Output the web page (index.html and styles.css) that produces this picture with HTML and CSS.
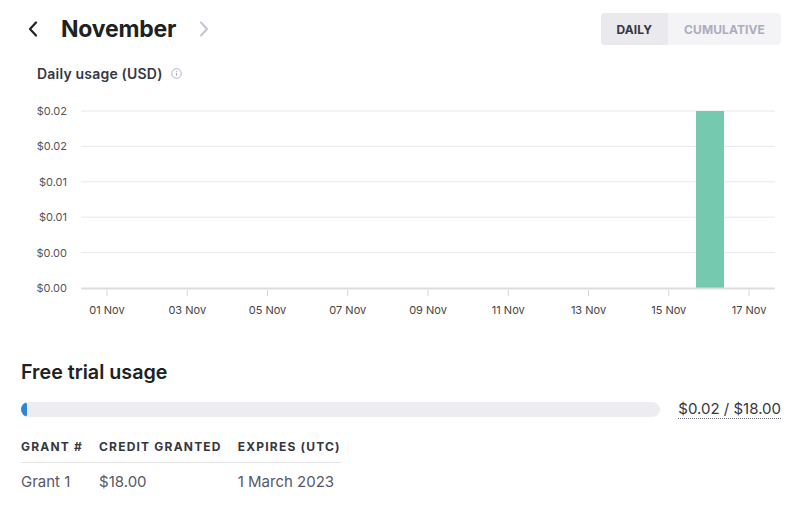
FILE: index.html
```html
<!DOCTYPE html>
<html lang="en">
<head>
    <meta charset="UTF-8">
    <title>Usage</title>
    <link rel="stylesheet" href="styles.css">
</head>
<body>
    <div class="page">
        <div class="month-bar">
            <div class="month-nav">
                <button class="chev">
                    <svg width="10" height="16" viewBox="0 0 10 16"><path d="M8 1.5 2 8l6 6.5" fill="none" stroke="#202123" stroke-width="2.2" stroke-linecap="round" stroke-linejoin="round"/></svg>
                </button>
                <h1 class="month">November</h1>
                <button class="chev chev-off">
                    <svg width="10" height="16" viewBox="0 0 10 16"><path d="M2 1.5 8 8l-6 6.5" fill="none" stroke="#c5c5d2" stroke-width="2" stroke-linecap="round" stroke-linejoin="round"/></svg>
                </button>
            </div>
            <div class="toggle">
                <span class="seg seg-on">DAILY</span>
                <span class="seg">CUMULATIVE</span>
            </div>
        </div>

        <div class="chart-title">
            Daily usage (USD)
            <svg width="11" height="11" viewBox="0 0 12 12"><circle cx="6" cy="6" r="5.2" fill="none" stroke="#acacbe" stroke-width="1"/><path d="M6 5.2v3.4" stroke="#acacbe" stroke-width="1.1"/><circle cx="6" cy="3.6" r="0.7" fill="#acacbe"/></svg>
        </div>

        <svg class="chart" width="760" height="230" viewBox="21 95 760 230">
            <g class="grid">
                <line x1="81" x2="775" y1="111" y2="111"/>
                <line x1="81" x2="775" y1="146.4" y2="146.4"/>
                <line x1="81" x2="775" y1="181.8" y2="181.8"/>
                <line x1="81" x2="775" y1="217.2" y2="217.2"/>
                <line x1="81" x2="775" y1="252.6" y2="252.6"/>
            </g>
            <g class="ylab">
                <text x="67" y="111">$0.02</text>
                <text x="67" y="146.4">$0.02</text>
                <text x="67" y="181.8">$0.01</text>
                <text x="67" y="217.2">$0.01</text>
                <text x="67" y="252.6">$0.00</text>
                <text x="67" y="288">$0.00</text>
            </g>
            <rect class="bar" x="696" y="111" width="28" height="177"/>
            <line class="axis" x1="81" x2="775" y1="288.5" y2="288.5"/>
            <g class="ticks">
                <line x1="107" x2="107" y1="290" y2="296"/>
                <line x1="187.25" x2="187.25" y1="290" y2="296"/>
                <line x1="267.5" x2="267.5" y1="290" y2="296"/>
                <line x1="347.75" x2="347.75" y1="290" y2="296"/>
                <line x1="428" x2="428" y1="290" y2="296"/>
                <line x1="508.25" x2="508.25" y1="290" y2="296"/>
                <line x1="588.5" x2="588.5" y1="290" y2="296"/>
                <line x1="668.75" x2="668.75" y1="290" y2="296"/>
                <line x1="749" x2="749" y1="290" y2="296"/>
            </g>
            <g class="xlab">
                <text x="107" y="314">01 Nov</text>
                <text x="187.25" y="314">03 Nov</text>
                <text x="267.5" y="314">05 Nov</text>
                <text x="347.75" y="314">07 Nov</text>
                <text x="428" y="314">09 Nov</text>
                <text x="508.25" y="314">11 Nov</text>
                <text x="588.5" y="314">13 Nov</text>
                <text x="668.75" y="314">15 Nov</text>
                <text x="749" y="314">17 Nov</text>
            </g>
        </svg>

        <h2 class="section-title">Free trial usage</h2>
        <div class="usage-row">
            <div class="track"><div class="fill" style="width: 0.9%"></div></div>
            <span class="amount">$0.02 / $18.00</span>
        </div>

        <table class="grants">
            <thead>
                <tr><th>Grant #</th><th>Credit granted</th><th>Expires (UTC)</th></tr>
            </thead>
            <tbody>
                <tr><td>Grant 1</td><td>$18.00</td><td>1 March 2023</td></tr>
            </tbody>
        </table>
    </div>
</body>
</html>
```

FILE: styles.css
```css
body {
    margin: 0;
    background: #fff;
    font-family: Inter, "Noto Sans", sans-serif;
    color: #202123;
}

.page {
    padding: 13px 24px 0 21px;
}

.month-bar {
    display: flex;
    justify-content: space-between;
    align-items: center;
    height: 32px;
}

.month-nav {
    display: flex;
    align-items: center;
}

.chev {
    border: none;
    background: none;
    padding: 0;
    width: 22px;
    height: 22px;
    display: flex;
    align-items: center;
    justify-content: center;
    cursor: pointer;
}

.chev:first-child {
    margin-left: 1px;
}

.month {
    margin: 0 17px 0 17px;
    font-size: 23px;
    font-weight: 700;
    letter-spacing: -0.2px;
}

.toggle {
    display: flex;
    height: 32px;
    border-radius: 4px;
    overflow: hidden;
    background: #f4f4f6;
}

.seg {
    display: flex;
    align-items: center;
    padding: 0 16px;
    font-size: 12px;
    font-weight: 700;
    letter-spacing: 0.1px;
    color: #acacbe;
}

.seg-on {
    background: #e9e9ee;
    color: #353740;
}

.chart-title {
    display: flex;
    align-items: center;
    gap: 8px;
    margin: 20px 0 0 16px;
    font-size: 14px;
    font-weight: 600;
    letter-spacing: 0.2px;
    color: #353740;
    height: 16px;
}

.chart {
    display: block;
    margin-top: 14px;
}

.grid line {
    stroke: #e8e8e8;
    stroke-width: 1;
}

.axis {
    stroke: #dcdcdc;
    stroke-width: 2;
}

.ticks line {
    stroke: #d6d6d6;
    stroke-width: 1;
}

.bar {
    fill: #74c9ae;
}

.ylab text {
    font-size: 11px;
    fill: #555;
    text-anchor: end;
    dominant-baseline: central;
}

.xlab text {
    font-size: 11px;
    fill: #444;
    text-anchor: middle;
}

.section-title {
    margin: 35px 0 0;
    font-size: 19.7px;
    font-weight: 600;
    line-height: 24px;
}

.usage-row {
    display: flex;
    align-items: center;
    gap: 18px;
    margin-top: 15px;
}

.track {
    flex: 1;
    height: 15px;
    border-radius: 8px;
    background: #ececf1;
    overflow: hidden;
}

.fill {
    height: 100%;
    min-width: 6px;
    border-radius: 8px;
    background: #2f86d0;
}

.amount {
    font-size: 15px;
    color: #353740;
    border-bottom: 1px dotted #6e6e80;
    line-height: 19px;
}

.grants {
    border-collapse: collapse;
    margin-top: 16px;
}

.grants th {
    text-align: left;
    font-size: 12px;
    font-weight: 700;
    letter-spacing: 1.2px;
    text-transform: uppercase;
    color: #353740;
    padding: 4px 16px 8px 0;
    border-bottom: 1px solid #e5e5e5;
}

.grants td {
    font-size: 15px;
    color: #565869;
    padding: 9px 16px 8px 0;
}

.grants th:last-child,
.grants td:last-child {
    padding-right: 0;
}
```
